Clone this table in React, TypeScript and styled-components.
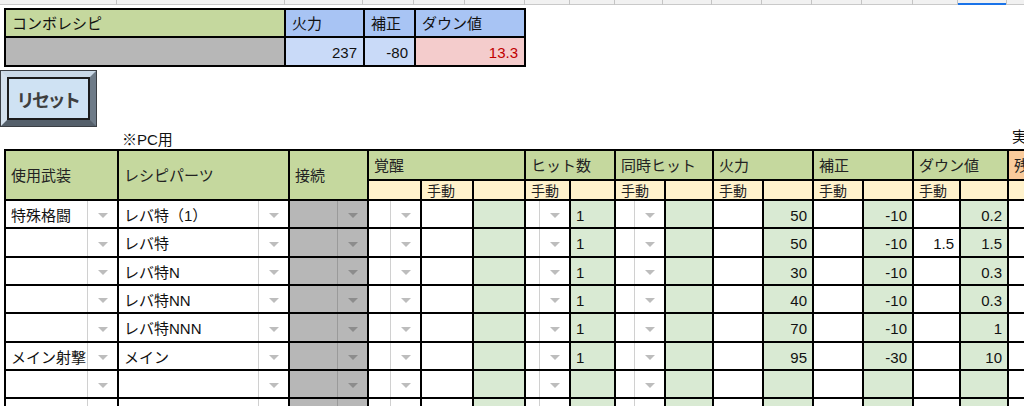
import React from "react";
import styled, { createGlobalStyle } from "styled-components";

const GlobalStyle = createGlobalStyle`
  html, body {
    margin: 0;
    padding: 0;
    background: #ffffff;
    overflow: hidden;
  }
  body {
    font-family: "Liberation Sans", "Noto Sans CJK JP", sans-serif;
    color: #111;
  }
`;

const Page = styled.div`
  width: 1024px;
  height: 406px;
  overflow: hidden;
  display: flex;
  flex-direction: column;
`;

/* ---------- top column-header strip ---------- */
const Strip = styled.div`
  display: flex;
  height: 5px;
  flex: none;
  background: #f1f1f1;
  box-shadow: inset 0 -1px 0 #c9c9c9;
`;

const StripCol = styled.div<{ $w: number; $active?: boolean }>`
  flex: none;
  width: ${(p) => p.$w}px;
  box-sizing: border-box;
  border-right: 1px solid #c4c4c4;
  ${(p) => (p.$active ? "box-shadow: inset 0 -2px 0 #1a73e8;" : "")}
`;

/* ---------- summary table ---------- */
const Summary = styled.div`
  display: grid;
  grid-template-columns: 278px 77px 49px 108px;
  grid-template-rows: 26px 27px;
  gap: 2px;
  padding: 2px;
  background: #000;
  width: max-content;
  margin: 3px 0 0 4px;
  flex: none;
`;

const SumCell = styled.div<{ $bg: string; $right?: boolean; $color?: string; $jp?: boolean }>`
  background: ${(p) => p.$bg};
  color: ${(p) => p.$color || "#111"};
  font-family: ${(p) =>
    p.$jp ? '"Noto Sans CJK JP", sans-serif' : '"Liberation Sans", "Noto Sans CJK JP", sans-serif'};
  font-size: 15px;
  line-height: 18px;
  display: flex;
  align-items: center;
  justify-content: ${(p) => (p.$right ? "flex-end" : "flex-start")};
  padding: ${(p) => (p.$right ? "2px 6px 0 0" : "0 0 0 6px")};
  white-space: nowrap;
  overflow: hidden;
`;

/* ---------- reset button ---------- */
const ResetButton = styled.button`
  flex: none;
  box-sizing: border-box;
  width: 97px;
  height: 57px;
  margin-top: 3px;
  padding: 0;
  border-style: solid;
  border-width: 7px;
  border-color: #c9d8e6 #6e7b88 #55606b #d3e0ec;
  outline: 1px solid #3b3f44;
  outline-offset: -1px;
  background: #cfe2f3;
  display: flex;
  cursor: pointer;
`;

const ResetFace = styled.span`
  flex: 1;
  border: 2px solid #1c1c1c;
  background: #cfe2f3;
  display: flex;
  align-items: center;
  justify-content: center;
  font-family: "Noto Sans CJK JP", sans-serif;
  font-weight: 700;
  font-size: 18px;
  color: #3e3e3e;
  letter-spacing: -2.5px;
  padding-right: 2px;
`;

/* ---------- note row ---------- */
const NoteRow = styled.div`
  flex: none;
  height: 22px;
  display: flex;
`;

const PcNote = styled.span`
  align-self: flex-end;
  margin-left: 122px;
  font-family: "Liberation Sans", "Noto Sans CJK JP", sans-serif;
  font-size: 15px;
  line-height: 16px;
  padding-bottom: 1px;
`;

const SideNote = styled.span`
  align-self: flex-start;
  margin-left: auto;
  width: 12px;
  overflow: hidden;
  white-space: nowrap;
  font-family: "Noto Sans CJK JP", sans-serif;
  font-size: 15px;
  line-height: 18px;
`;

/* ---------- main sheet ---------- */
const mainCols = [111, 169, 77, 51, 50, 50, 43, 43, 48, 46, 48, 48, 48, 48, 45, 46, 60];
const mainRows = [28, 18, 26, 27, 26, 26, 27, 26, 26, 26];

const Sheet = styled.div`
  display: grid;
  grid-template-columns: ${mainCols.map((c) => `${c}px`).join(" ")};
  grid-template-rows: ${mainRows.map((r) => `${r}px`).join(" ")};
  gap: 2px;
  padding: 2px;
  background: #000;
  width: max-content;
  margin-left: 4px;
  flex: none;
`;

const HeadCell = styled.div<{ $span?: number; $rows?: number; $bg?: string }>`
  grid-column: span ${(p) => p.$span || 1};
  grid-row: span ${(p) => p.$rows || 1};
  background: ${(p) => p.$bg || "#c5d89e"};
  font-family: "Noto Sans CJK JP", sans-serif;
  font-size: 15px;
  line-height: 18px;
  display: flex;
  align-items: center;
  padding-left: 5px;
  white-space: nowrap;
  overflow: hidden;
  color: #222;
`;

const SubCell = styled.div`
  background: #fff2cc;
  font-family: "Noto Sans CJK JP", sans-serif;
  font-size: 14px;
  line-height: 16px;
  display: flex;
  align-items: center;
  padding-left: 5px;
  white-space: nowrap;
  overflow: hidden;
  color: #222;
`;

const DataCell = styled.div<{ $bg?: string; $align?: "left" | "right" }>`
  background: ${(p) => p.$bg || "#ffffff"};
  font-size: 15px;
  line-height: 18px;
  display: flex;
  align-items: center;
  justify-content: ${(p) => (p.$align === "right" ? "flex-end" : "flex-start")};
  padding: ${(p) => (p.$align === "right" ? "3px 5px 0 0" : "3px 0 0 5px")};
  white-space: nowrap;
  overflow: hidden;
  color: #111;
`;

const DropCell = styled.div<{ $bg?: string }>`
  background: ${(p) => p.$bg || "#ffffff"};
  display: flex;
  overflow: hidden;
`;

const DropText = styled.span`
  flex: 1;
  min-width: 0;
  overflow: hidden;
  white-space: nowrap;
  font-family: "Liberation Sans", "Noto Sans CJK JP", sans-serif;
  font-size: 15px;
  line-height: 18px;
  display: flex;
  align-items: center;
  padding: 3px 0 0 5px;
  color: #111;
`;

const DropArrow = styled.span<{ $dark?: boolean }>`
  flex: none;
  width: 30px;
  border-left: 1px solid ${(p) => (p.$dark ? "#9a9a9a" : "#d0d0d0")};
  display: flex;
  align-items: center;
  justify-content: center;
  padding-top: 3px;
  box-sizing: border-box;

  &::after {
    content: "";
    width: 0;
    height: 0;
    border-left: 5px solid transparent;
    border-right: 5px solid transparent;
    border-top: 5px solid ${(p) => (p.$dark ? "#8c8c8c" : "#bdbdbd")};
  }
`;

const GREEN = "#d9ead3";
const GRAY = "#b7b7b7";

type Row = {
  weapon?: string;
  part?: string;
  hit?: string;
  fire?: string;
  corr?: string;
  downManual?: string;
  down?: string;
};

const rows: Row[] = [
  { weapon: "特殊格闘", part: "レバ特（1）", hit: "1", fire: "50", corr: "-10", down: "0.2" },
  { part: "レバ特", hit: "1", fire: "50", corr: "-10", downManual: "1.5", down: "1.5" },
  { part: "レバ特N", hit: "1", fire: "30", corr: "-10", down: "0.3" },
  { part: "レバ特NN", hit: "1", fire: "40", corr: "-10", down: "0.3" },
  { part: "レバ特NNN", hit: "1", fire: "70", corr: "-10", down: "1" },
  { weapon: "メイン射撃", part: "メイン", hit: "1", fire: "95", corr: "-30", down: "10" },
  {},
  {},
];

const Dropdown: React.FC<{ text?: string; bg?: string; dark?: boolean }> = ({ text, bg, dark }) => (
  <DropCell $bg={bg}>
    <DropText>{text}</DropText>
    <DropArrow $dark={dark} />
  </DropCell>
);

const stripCols: { w: number; active?: boolean }[] = [
  { w: 117 },
  { w: 168 },
  { w: 78 },
  { w: 51 },
  { w: 51 },
  { w: 60 },
  { w: 45 },
  { w: 45 },
  { w: 48 },
  { w: 49 },
  { w: 50 },
  { w: 50 },
  { w: 50 },
  { w: 51 },
  { w: 45 },
  { w: 49, active: true },
  { w: 60 },
];

export default function App() {
  return (
    <>
      <GlobalStyle />
      <Page>
        <Strip>
          {stripCols.map((c, i) => (
            <StripCol key={i} $w={c.w} $active={c.active} />
          ))}
        </Strip>

        <Summary>
          <SumCell $bg="#c5d89e" $jp>
            コンボレシピ
          </SumCell>
          <SumCell $bg="#a8c4f4" $jp>
            火力
          </SumCell>
          <SumCell $bg="#a8c4f4" $jp>
            補正
          </SumCell>
          <SumCell $bg="#a8c4f4" $jp>
            ダウン値
          </SumCell>
          <SumCell $bg={GRAY} />
          <SumCell $bg="#c9daf8" $right>
            237
          </SumCell>
          <SumCell $bg="#c9daf8" $right>
            -80
          </SumCell>
          <SumCell $bg="#f4cccc" $right $color="#c00000">
            13.3
          </SumCell>
        </Summary>

        <ResetButton type="button">
          <ResetFace>リセット</ResetFace>
        </ResetButton>

        <NoteRow>
          <PcNote>※PC用</PcNote>
          <SideNote>実装</SideNote>
        </NoteRow>

        <Sheet>
          <HeadCell $rows={2}>使用武装</HeadCell>
          <HeadCell $rows={2}>レシピパーツ</HeadCell>
          <HeadCell $rows={2}>接続</HeadCell>
          <HeadCell $span={3}>覚醒</HeadCell>
          <HeadCell $span={2}>ヒット数</HeadCell>
          <HeadCell $span={2}>同時ヒット</HeadCell>
          <HeadCell $span={2}>火力</HeadCell>
          <HeadCell $span={2}>補正</HeadCell>
          <HeadCell $span={2}>ダウン値</HeadCell>
          <HeadCell $bg="#f9cb9c">残り</HeadCell>

          <SubCell />
          <SubCell>手動</SubCell>
          <SubCell />
          <SubCell>手動</SubCell>
          <SubCell />
          <SubCell>手動</SubCell>
          <SubCell />
          <SubCell>手動</SubCell>
          <SubCell />
          <SubCell>手動</SubCell>
          <SubCell />
          <SubCell>手動</SubCell>
          <SubCell />
          <SubCell />

          {rows.map((r, i) => (
            <React.Fragment key={i}>
              <Dropdown text={r.weapon} />
              <Dropdown text={r.part} />
              <Dropdown bg={GRAY} dark />
              <Dropdown />
              <DataCell />
              <DataCell $bg={GREEN} />
              <Dropdown />
              <DataCell $bg={GREEN}>{r.hit}</DataCell>
              <Dropdown />
              <DataCell $bg={GREEN} />
              <DataCell />
              <DataCell $bg={GREEN} $align="right">
                {r.fire}
              </DataCell>
              <DataCell />
              <DataCell $bg={GREEN} $align="right">
                {r.corr}
              </DataCell>
              <DataCell $align="right">{r.downManual}</DataCell>
              <DataCell $bg={GREEN} $align="right">
                {r.down}
              </DataCell>
              <DataCell />
            </React.Fragment>
          ))}
        </Sheet>
      </Page>
    </>
  );
}
